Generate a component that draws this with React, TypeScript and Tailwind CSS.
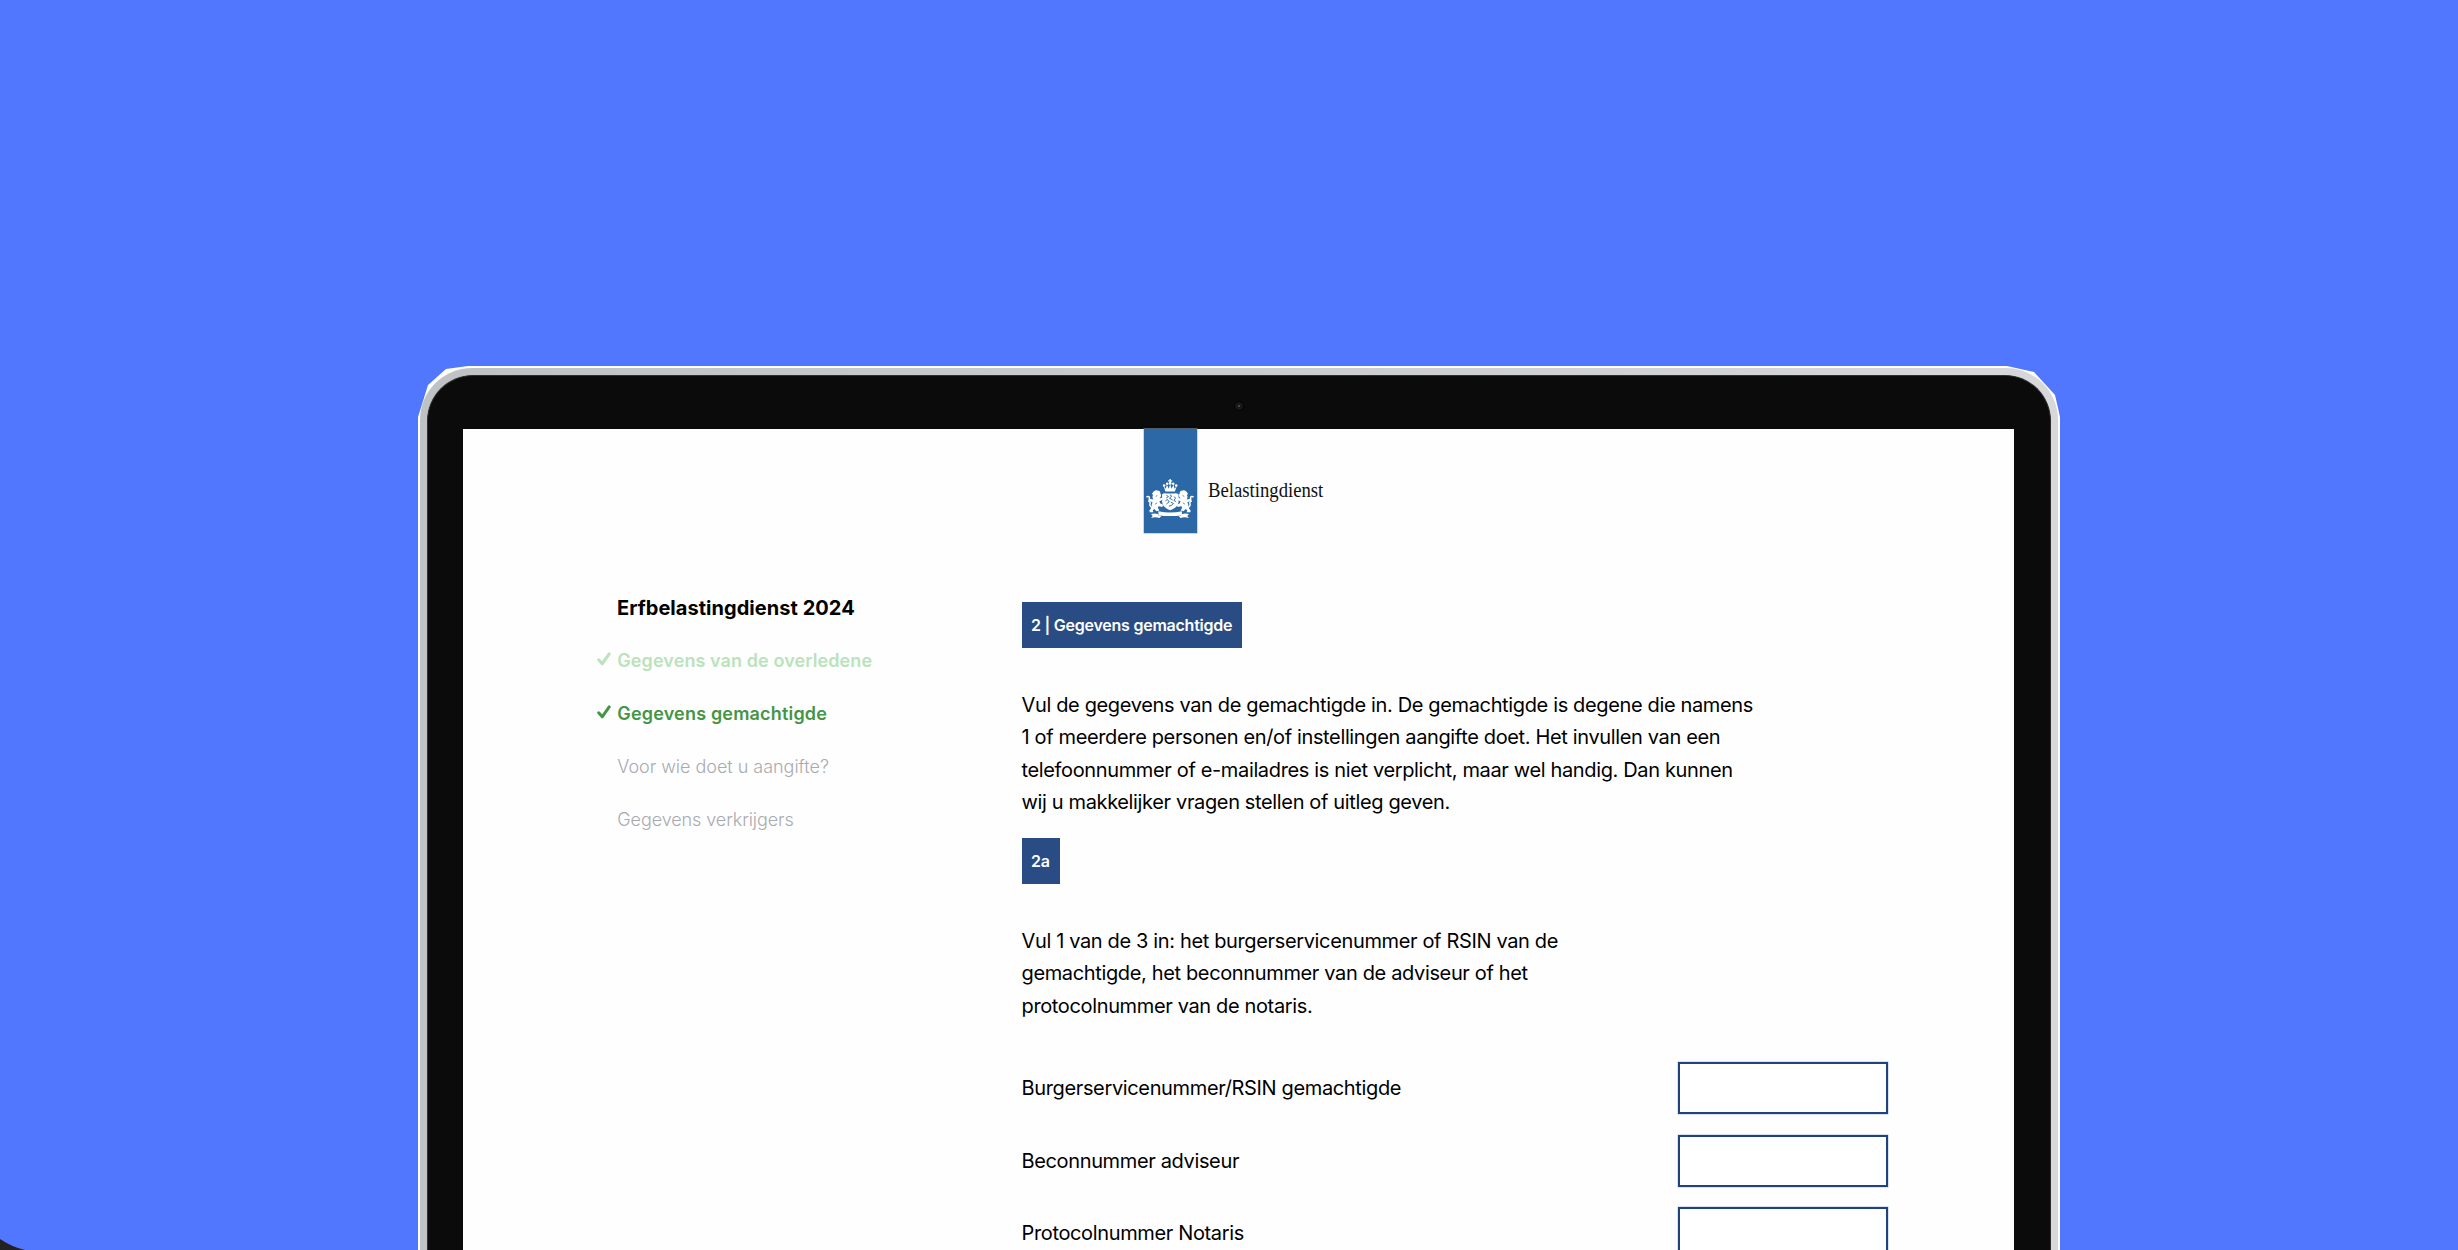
import type { ReactNode } from "react";

function Lion() {
  return (
    <g>
      <path d="M101 335 Q106 328 113 331 Q122 331 122 341 Q126 345 122 351 L119 356 L127 352 L128 359 L119 364 L121 369 L130 374 L128 380 L117 378 L114 382 L119 391 L110 393 L104 386 L99 390 L101 396 L90 396 L89 391 L97 380 Q94 372 99 367 L92 363 L89 367 L85 364 L90 356 L101 358 Q96 350 100 345 L97 341 Z" />
      <path
        d="M97 382 Q87 375 92 368 Q87 362 89 356 Q91 347 82 350"
        fill="none"
        stroke="currentColor"
        strokeWidth="4.5"
        strokeLinecap="round"
      />
      <path
        d="M108 349 L113 346 M106 372 L112 368"
        fill="none"
        stroke="#2b68a5"
        strokeWidth="2.2"
      />
    </g>
  );
}

function CoatOfArms() {
  return (
    <svg
      viewBox="79 297 143 119"
      className="h-10 w-12 shrink-0 text-white"
      fill="currentColor"
      aria-hidden="true"
    >
      {/* crown */}
      <path d="M149 297 h4 v4 h4 v3.5 h-4 v5 h-4 v-5 h-4 v-3.5 h4 Z" />
      <circle cx="133" cy="316" r="3.8" />
      <circle cx="142" cy="311" r="3.8" />
      <circle cx="151" cy="310" r="4" />
      <circle cx="160" cy="311" r="3.8" />
      <circle cx="169" cy="316" r="3.8" />
      <path d="M131 317 L138 326 L141 314 L147 326 L151 312 L155 326 L161 314 L164 326 L171 317 L165 334 H137 Z" />
      {/* shield */}
      <path d="M127 342 Q133 338 139 340 H163 Q169 338 176 342 V366 Q174 381 151 390 Q129 381 127 366 Z" />
      <path
        d="M140 346 L146 349 L139 354 M150 344 L156 348 L149 354 L158 359 M163 349 L167 354 L162 361 L168 364 M137 362 L143 358 L148 365 L140 371 M153 366 L161 370 L154 376 L147 378"
        fill="none"
        stroke="#2b68a5"
        strokeWidth="2.8"
      />
      {/* supporters */}
      <Lion />
      <g transform="translate(301 0) scale(-1 1)">
        <Lion />
      </g>
      {/* motto ribbon */}
      <path d="M116 393 Q151 400 186 393 V405 Q151 410 116 405 Z" />
      <path d="M94 401 Q106 399 114 401 L117 406 H126 L119 413 Q108 409 94 413 L99 407 Z" />
      <path d="M207 401 Q195 399 187 401 L184 406 H175 L182 413 Q193 409 207 413 L202 407 Z" />
    </svg>
  );
}

function Check() {
  return (
    <svg viewBox="0 0 14 14" className="-mt-1 h-3.5 w-3.5" fill="none" aria-hidden="true">
      <path
        d="M1.7 7.8 L5.2 11.8 L12.2 1.9"
        stroke="currentColor"
        strokeWidth="3"
        strokeLinecap="round"
        strokeLinejoin="round"
      />
    </svg>
  );
}

function Badge({ children }: { children: ReactNode }) {
  return (
    <div className="flex h-[46px] w-fit items-center whitespace-nowrap bg-[#284c83] pr-2.5 pl-[9.5px] text-base font-semibold tracking-[-0.24px] text-white">
      {children}
    </div>
  );
}

const steps = [
  { label: "Gegevens van de overledene", done: true, style: "font-semibold text-[#b9e3ba] tracking-[0.09px]" },
  { label: "Gegevens gemachtigde", done: true, style: "font-semibold text-[#449545] tracking-[0.18px]" },
  { label: "Voor wie doet u aangifte?", done: false, style: "font-light text-[#a9aab0] tracking-[-0.03px]" },
  { label: "Gegevens verkrijgers", done: false, style: "font-light text-[#a9aab0] tracking-[-0.09px]" },
];

const fields = ["Burgerservicenummer/RSIN gemachtigde", "Beconnummer adviseur", "Protocolnummer Notaris"];

export default function App() {
  return (
    <main className="relative h-[1250px] w-[2458px] overflow-hidden bg-[#5277ff] pt-[366px] pl-[418px] font-['Inter',sans-serif]">
      <div className="h-[884px] w-[1642px] bg-white px-0.5 pt-0.5 [clip-path:polygon(0_51px,10px_19px,28px_3px,50px_0,1589px_0,1616px_6px,1637px_29px,1640px_42px,1642px_51px,1642px_100%,0_100%)]">
        <div className="h-full rounded-t-[52px] bg-linear-to-r from-[#bfc2c5] via-[#cbccce] to-[#d8d8db] px-[7px] pt-[7px]">
          <div className="relative h-full rounded-t-[46px] border-x border-t border-[#2c2e30] bg-[#0b0b0b] pt-[53px] pr-9 pl-[35px]">
            <div className="absolute top-[25px] left-[806px] flex h-2.5 w-2.5 items-center justify-center rounded-full border border-[#020202] bg-[#181818]">
              <span className="h-0.5 w-0.5 rounded-full bg-[#555555]" />
            </div>

            <div className="flex h-full flex-col bg-[#fefefe] text-black">
              <header className="flex h-[104px] shrink-0 pl-[680.5px]">
                <div className="flex w-[53px] shrink-0 justify-center bg-[#2b68a5] pt-[50px] shadow-[0_0_0_0.5px_#8fb2d6]">
                  <CoatOfArms />
                </div>
                <span className="mt-[49px] ml-[11.5px] origin-left scale-x-[0.935] font-['Liberation_Serif',serif] text-xl leading-6 text-[#111111]">
                  Belastingdienst
                </span>
              </header>

              <div className="flex">
                <aside className="mt-12 w-[425px] shrink-0 pl-[134px] whitespace-nowrap">
                  <h1 className="flex h-[53px] items-center pl-5 text-xl font-bold tracking-[0.04px]">
                    Erfbelastingdienst 2024
                  </h1>
                  <ul>
                    {steps.map((s) => (
                      <li key={s.label} className={`flex h-[53px] items-center text-lg ${s.style}`}>
                        <span className="w-[20.3px] shrink-0">{s.done && <Check />}</span>
                        {s.label}
                      </li>
                    ))}
                  </ul>
                </aside>

                <section className="mt-[69px] ml-[133.5px] w-[866px] shrink-0 text-xl tracking-[-0.357px]">
                  <Badge>2 | Gegevens gemachtigde</Badge>
                  <p className="mt-[41px] leading-[32.3px] whitespace-nowrap">
                    Vul de gegevens van de gemachtigde in. De gemachtigde is degene die namens
                    <br />1 of meerdere personen en/of instellingen aangifte doet. Het invullen van een
                    <br />
                    telefoonnummer of e-mailadres is niet verplicht, maar wel handig. Dan kunnen
                    <br />
                    wij u makkelijker vragen stellen of uitleg geven.
                  </p>
                  <div className="mt-[19.8px]">
                    <Badge>2a</Badge>
                  </div>
                  <p className="mt-[41px] leading-[32.3px] whitespace-nowrap">
                    Vul 1 van de 3 in: het burgerservicenummer of RSIN van de
                    <br />
                    gemachtigde, het beconnummer van de adviseur of het
                    <br />
                    protocolnummer van de notaris.
                  </p>
                  <div className="mt-[40.6px] flex flex-col gap-[20.5px]">
                    {fields.map((label) => (
                      <label key={label} className="flex h-[52px] items-center justify-between">
                        {label}
                        <input
                          type="text"
                          className="h-full w-[210px] border-2 border-[#20437f] bg-white shadow-[0_0_0_0.5px_#b4c4e0] outline-none"
                        />
                      </label>
                    ))}
                  </div>
                </section>
              </div>
            </div>
          </div>
        </div>
      </div>

      <svg className="absolute bottom-0 left-0 h-[11px] w-[25px]" viewBox="0 0 25 11" aria-hidden="true">
        <path d="M0 0 Q12 8 25 11 H0 Z" fill="#222225" />
      </svg>
    </main>
  );
}
